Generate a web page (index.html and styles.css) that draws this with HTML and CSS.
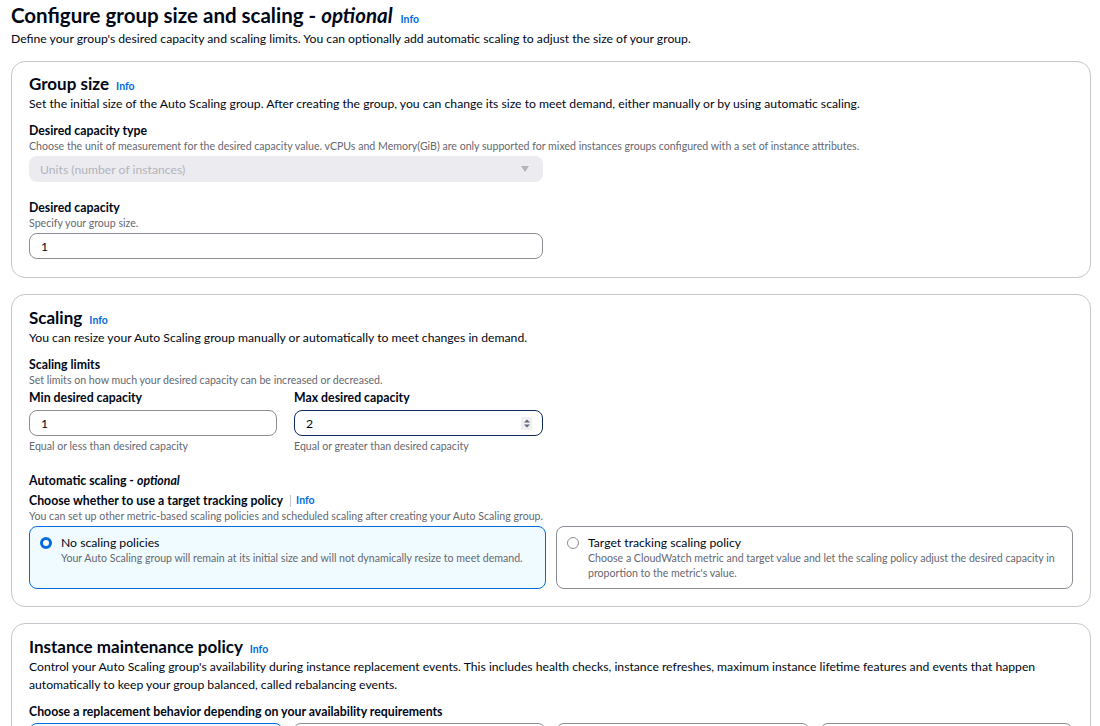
FILE: index.html
```html
<!DOCTYPE html>
<html lang="en">
<head>
<meta charset="utf-8">
<title>Configure group size and scaling</title>
<link rel="stylesheet" href="styles.css">
</head>
<body>
<div class="page">
  <header class="page-head">
    <h1 class="title">Configure group size and scaling - <i>optional</i> <a class="info info--title">Info</a></h1>
    <p class="page-desc">Define your group's desired capacity and scaling limits. You can optionally add automatic scaling to adjust the size of your group.</p>
  </header>

  <section class="panel panel--first">
    <h2 class="panel-title">Group size <a class="info">Info</a></h2>
    <p class="panel-desc">Set the initial size of the Auto Scaling group. After creating the group, you can change its size to meet demand, either manually or by using automatic scaling.</p>

    <div class="field field--first">
      <div class="label">Desired capacity type</div>
      <div class="hint">Choose the unit of measurement for the desired capacity value. vCPUs and Memory(GiB) are only supported for mixed instances groups configured with a set of instance attributes.</div>
      <div class="select">
        <span>Units (number of instances)</span>
        <svg class="caret" width="10" height="8" viewBox="0 0 10 8"><path d="M1 1h8L5 7z" fill="#b4b4bb"/></svg>
      </div>
    </div>

    <div class="field field--second">
      <div class="label">Desired capacity</div>
      <div class="hint">Specify your group size.</div>
      <div class="input input--half">1</div>
    </div>
  </section>

  <section class="panel">
    <h2 class="panel-title">Scaling <a class="info">Info</a></h2>
    <p class="panel-desc">You can resize your Auto Scaling group manually or automatically to meet changes in demand.</p>

    <div class="group">
      <div class="label">Scaling limits</div>
      <div class="hint">Set limits on how much your desired capacity can be increased or decreased.</div>
      <div class="limits">
        <div class="limit">
          <div class="label">Min desired capacity</div>
          <div class="input">1</div>
          <div class="hint hint--after">Equal or less than desired capacity</div>
        </div>
        <div class="limit">
          <div class="label">Max desired capacity</div>
          <div class="input input--focus">
            <span>2</span>
            <span class="spinner">
              <svg width="8" height="11" viewBox="0 0 8 11"><path d="M4 1.5L7 4.5H1z" fill="#5f6b7a"/><path d="M4 9.5L1 6.5H7z" fill="#5f6b7a"/></svg>
            </span>
          </div>
          <div class="hint hint--after">Equal or greater than desired capacity</div>
        </div>
      </div>
    </div>

    <div class="group group--auto">
      <div class="label">Automatic scaling - <i>optional</i></div>
      <div class="label label--sub">Choose whether to use a target tracking policy <span class="sep"></span> <a class="info">Info</a></div>
      <div class="hint">You can set up other metric-based scaling policies and scheduled scaling after creating your Auto Scaling group.</div>
      <div class="tiles tiles--two">
        <div class="tile tile--selected">
          <span class="radio radio--on"></span>
          <div class="tile-body">
            <div class="tile-title">No scaling policies</div>
            <div class="tile-desc">Your Auto Scaling group will remain at its initial size and will not dynamically resize to meet demand.</div>
          </div>
        </div>
        <div class="tile">
          <span class="radio"></span>
          <div class="tile-body">
            <div class="tile-title">Target tracking scaling policy</div>
            <div class="tile-desc">Choose a CloudWatch metric and target value and let the scaling policy adjust the desired capacity in proportion to the metric's value.</div>
          </div>
        </div>
      </div>
    </div>
  </section>

  <section class="panel">
    <h2 class="panel-title">Instance maintenance policy <a class="info">Info</a></h2>
    <p class="panel-desc">Control your Auto Scaling group's availability during instance replacement events. This includes health checks, instance refreshes, maximum instance lifetime features and events that happen automatically to keep your group balanced, called rebalancing events.</p>
    <div class="group group--replace">
      <div class="label">Choose a replacement behavior depending on your availability requirements</div>
      <div class="tiles tiles--four">
        <div class="tile tile--selected">
          <span class="radio radio--on"></span>
          <div class="tile-body"><div class="tile-title">No policy</div></div>
        </div>
        <div class="tile">
          <span class="radio"></span>
          <div class="tile-body"><div class="tile-title">Mixed behavior</div></div>
        </div>
        <div class="tile">
          <span class="radio"></span>
          <div class="tile-body"><div class="tile-title">Prioritize availability</div></div>
        </div>
        <div class="tile">
          <span class="radio"></span>
          <div class="tile-body"><div class="tile-title">Control costs</div></div>
        </div>
      </div>
    </div>
  </section>
</div>
</body>
</html>
```

FILE: styles.css
```css
* { box-sizing: border-box; }

html, body {
  margin: 0;
  padding: 0;
  background: #ffffff;
}

body {
  font-family: "Lato", "Open Sans", sans-serif;
  color: #000716;
  font-size: 12px;
}

.page {
  padding: 0 9px 0 11px;
}

.title {
  margin: 0;
  font-size: 20.5px;
  line-height: 30px;
  font-weight: 700;
}

.title i { font-style: italic; }

.info {
  color: #006ce0;
  font-size: 10.5px;
  line-height: 1;
  font-weight: 700;
  margin-left: 3px;
}

.info--title { font-size: 10.5px; margin-left: 3px; }

.page-desc {
  margin: 0;
  font-size: 12.2px;
  line-height: 18px;
}

.page-head { margin-bottom: 13px; }

.panel {
  border: 1px solid #c6c6cd;
  border-radius: 14px;
  padding: 12px 17px 17px;
  margin-bottom: 16px;
}

.panel--first {
  padding-top: 11px;
  padding-bottom: 18px;
}

.panel-title {
  margin: 0;
  font-size: 17px;
  line-height: 22px;
  font-weight: 700;
}

.panel-desc {
  margin: 0;
  font-size: 12.2px;
  line-height: 18px;
}

.label {
  font-size: 12.3px;
  font-weight: 700;
  line-height: 17px;
}

.label i { font-style: italic; }

.label--sub { margin-top: 3px; display: flex; align-items: center; }

.sep {
  display: inline-block;
  width: 1px;
  height: 12px;
  background: #c6c6cd;
  margin: 0 5px 0 7px;
}

.label--sub .info { margin-left: 0; }

.hint {
  font-size: 10.6px;
  line-height: 14px;
  color: #656871;
}

.field--first { margin-top: 9px; }
.field--second { margin-top: 17px; }

.field .hint { margin-bottom: 3px; }

.select {
  width: 514px;
  height: 26px;
  border-radius: 8px;
  background: #ebebf0;
  color: #b4b4bb;
  display: flex;
  align-items: center;
  justify-content: space-between;
  padding: 0 13px 0 11px;
  font-size: 12.2px;
}

.input {
  height: 26px;
  border: 1px solid #8c8c94;
  border-radius: 8px;
  display: flex;
  align-items: center;
  justify-content: space-between;
  padding: 0 10px 0 11px;
  font-size: 12.2px;
}

.input--half { width: 514px; }

.input--focus { border-color: #0f2b5b; }

.spinner {
  display: flex;
  align-items: center;
  justify-content: center;
  width: 11px;
  height: 13px;
  background: #efeff1;
}

.group { margin-top: 9px; }

.limits {
  display: grid;
  grid-template-columns: 248px 249px;
  column-gap: 17px;
  margin-top: 2px;
}

.limit .input { margin-top: 4px; }
.hint--after { margin-top: 3px; }

.group--auto { margin-top: 19px; }

.tiles {
  display: grid;
  column-gap: 10px;
  margin-top: 3px;
}

.tiles--two { grid-template-columns: 1fr 1fr; }
.tiles--four { grid-template-columns: repeat(4, 1fr); }

.tile {
  border: 1px solid #8c8c94;
  border-radius: 8px;
  min-height: 61px;
  padding: 7px 12px 7px 10px;
  display: flex;
  align-items: flex-start;
  gap: 9px;
}

.tile--selected {
  background: #f0fbff;
  border-color: #006ce0;
}

.radio {
  flex: none;
  width: 12px;
  height: 12px;
  border-radius: 50%;
  border: 1.5px solid #8c8c94;
  margin-top: 3px;
  background: #ffffff;
}

.radio--on {
  border: 3.5px solid #006ce0;
}

.tile-title {
  font-size: 12.2px;
  line-height: 17px;
}

.tile-desc {
  font-size: 10.6px;
  line-height: 15px;
  color: #656871;
}

.group--replace { margin-top: 9px; }
```
